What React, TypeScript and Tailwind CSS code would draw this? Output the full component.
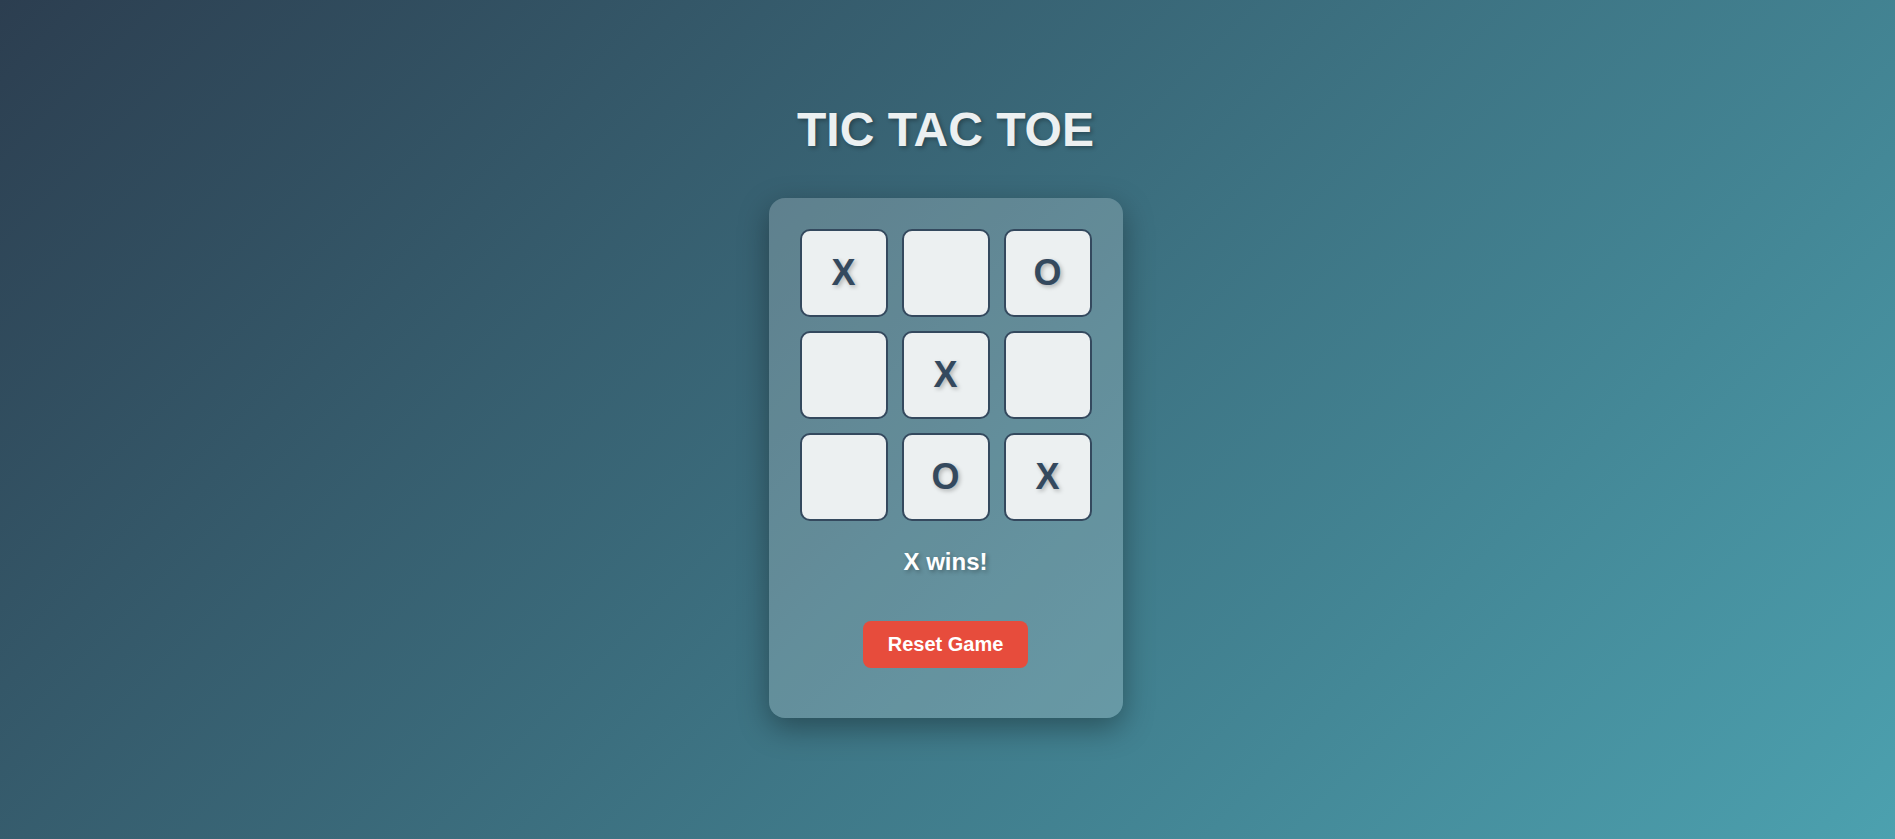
import { useState } from "react";

type Cell = "X" | "O" | null;

const lines = [
  [0, 1, 2],
  [3, 4, 5],
  [6, 7, 8],
  [0, 3, 6],
  [1, 4, 7],
  [2, 5, 8],
  [0, 4, 8],
  [2, 4, 6],
];

function getWinner(board: Cell[]) {
  for (const [a, b, c] of lines) {
    if (board[a] && board[a] === board[b] && board[a] === board[c]) return board[a];
  }
  return null;
}

const start: Cell[] = ["X", null, "O", null, "X", null, null, "O", "X"];

export default function App() {
  const [board, setBoard] = useState<Cell[]>(start);
  const [xNext, setXNext] = useState(false);

  const winner = getWinner(board);
  const full = board.every((c) => c !== null);
  const status = winner
    ? `${winner} wins!`
    : full
    ? "It's a draw!"
    : `Player ${xNext ? "X" : "O"}'s turn`;

  const handleClick = (i: number) => {
    if (board[i] || winner) return;
    const next = board.slice();
    next[i] = xNext ? "X" : "O";
    setBoard(next);
    setXNext(!xNext);
  };

  const reset = () => {
    setBoard(Array(9).fill(null));
    setXNext(true);
  };

  return (
    <div className="min-h-screen w-full bg-[linear-gradient(135deg,#2c3e50,#4ca1af)] flex flex-col items-center pt-[106px] pr-[4px] font-['Liberation_Sans',Arial,sans-serif]">
      <h1 className="text-[48px] leading-[48px] font-bold text-[#ecf0f1] [text-shadow:2px_2px_4px_rgba(0,0,0,0.3)] mb-[44px]">
        TIC TAC TOE
      </h1>

      <div className="w-[354px] bg-white/20 rounded-[16px] pt-[31px] px-[31px] pb-[50px] flex flex-col items-center shadow-[0_10px_30px_rgba(0,0,0,0.35)]">
        <div className="grid grid-cols-3 gap-[14px]">
          {board.map((cell, i) => (
            <button
              key={i}
              onClick={() => handleClick(i)}
              className="w-[88px] h-[88px] bg-[#ecf0f1] border-2 border-[#34495e] rounded-[10px] flex items-center justify-center text-[36px] leading-[normal] font-bold text-[#34495e] [text-shadow:2px_2px_4px_rgba(0,0,0,0.25)] cursor-pointer"
            >
              {cell}
            </button>
          ))}
        </div>

        <div className="mt-[27px] text-[24px] leading-[normal] font-bold text-white [text-shadow:2px_2px_4px_rgba(0,0,0,0.3)]">
          {status}
        </div>

        <button
          onClick={reset}
          className="mt-[45px] bg-[#e74c3c] text-white text-[20px] leading-[normal] font-bold px-[25px] py-[12px] rounded-[8px] cursor-pointer"
        >
          Reset Game
        </button>
      </div>
    </div>
  );
}
